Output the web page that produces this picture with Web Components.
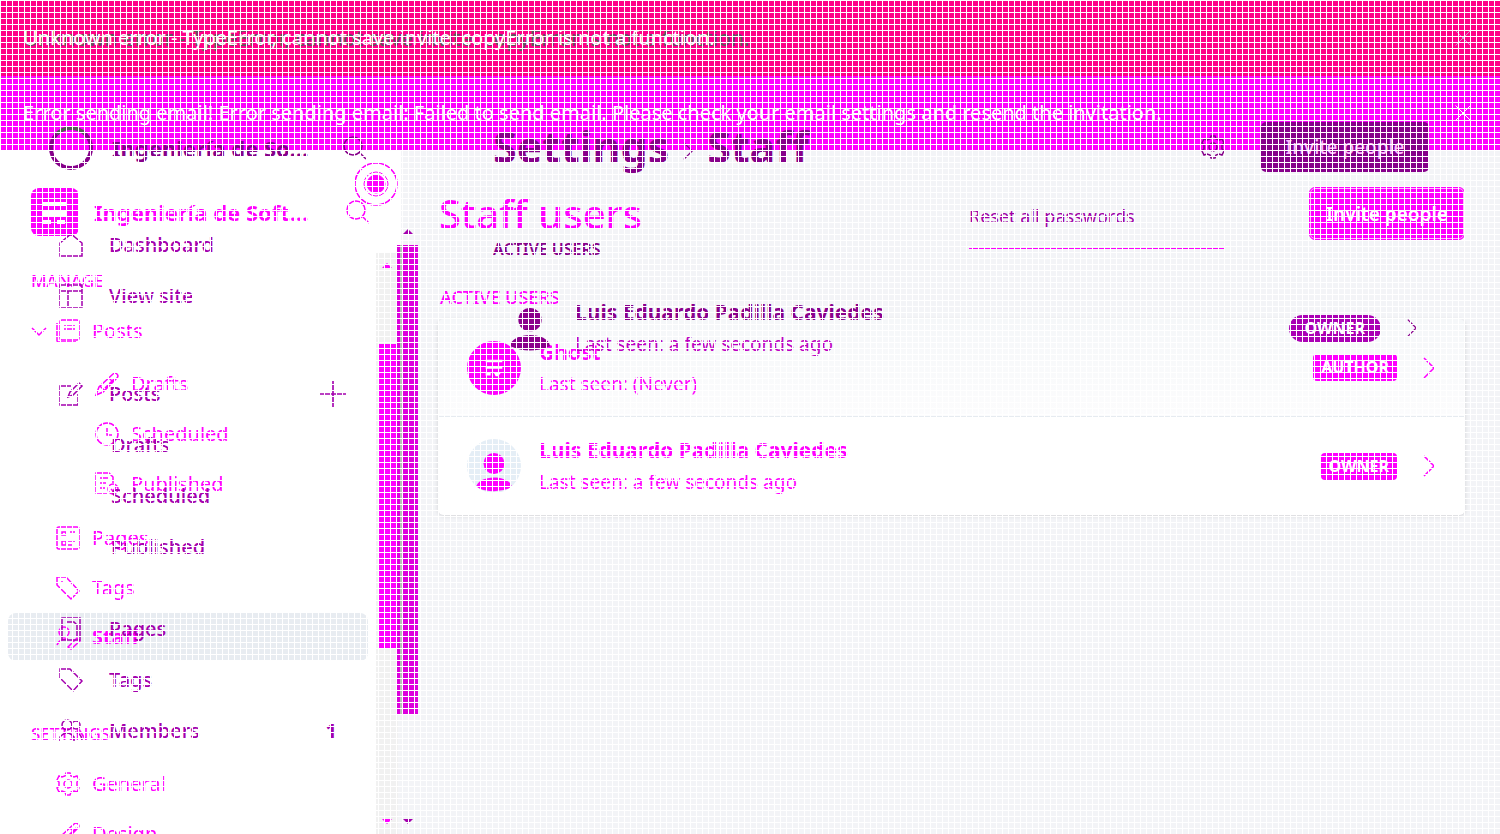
<!DOCTYPE html>
<html lang="en">
<head>
<meta charset="utf-8">
<title>Staff users</title>
<style>
html,body{margin:0;height:100%}
body{font-family:"Noto Sans","Open Sans",sans-serif;font-size:20px;color:#f0f;background:#f3f4f7;overflow:hidden}
</style>
</head>
<body>
<staff-page></staff-page>
<script>
const define=(name,html,fill)=>{
  const t=document.createElement('template');t.innerHTML=html;
  customElements.define(name,class extends HTMLElement{
    connectedCallback(){
      if(this.shadowRoot)return;
      const r=this.attachShadow({mode:'open'});
      const content=t.content.cloneNode(true);
      if(fill)fill(this,content);
      r.append(content);
    }
  });
};
const icons={
  search:'<circle cx="10" cy="10" r="9"/><path d="M17 17l6 6"/>',
  home:'<path d="M1 10L12 1l11 9v13H1z"/>',
  site:'<path d="M1 1h22v22H1zM1 7h22M9 7v16"/>',
  edit:'<path d="M12 4H1v19h18V12M9 15l2-5 9-9 3 3-9 9z"/>',
  page:'<path d="M3 1h18v22H3z"/><path d="M7 5h8l3 3v12"/>',
  tag:'<path d="M1 1h10l12 12-9 10L1 10z"/>',
  newtag:'<path d="M1 1h9l13 14-8 8L1 9z"/><path d="M6 5v2"/>',
  members:'<circle cx="8" cy="6" r="5"/><circle cx="17" cy="6" r="4"/><path d="M1 22v-4q7-8 14 0v4M16 13q6 1 7 8"/>',
  posts:'<rect x="4" y="1" width="19" height="20" rx="2"/><path d="M1 4v18q0 1 2 1h17M8 6h11M8 10h11"/>',
  pages:'<rect x="1" y="1" width="22" height="22" rx="2"/><path d="M6 6h4v3H6zM14 6h5M6 15h4v4H6zM12 15h7M12 19h5"/>',
  pencil:'<path d="M1 23l3-8L18 2q2-2 4 0t0 4L8 20zM5 14l5 5M10 16L20 6M14 6l4 4"/>',
  clock:'<circle cx="12" cy="12" r="11"/><path d="M12 6v7h5"/>',
  doc:'<path d="M12 21H1V1h13l4 4v6M5 6h8M5 11h6M5 16h5"/><circle cx="18" cy="17" r="5"/><path d="M16 17l2 2 3-4"/>',
  staff:'<circle cx="8" cy="7" r="5"/><path d="M1 20q3-7 11-6M12 22l9-9 3 3-9 8z"/>',
  gear:'<path d="M10 1h4l1 3 3 1 3-1 2 4-2 2v4l2 2-2 4-3-1-3 1-1 3h-4l-1-3-3-1-3 1-2-4 2-2v-4L1 8l2-4 3 1 3-1z"/><circle cx="12" cy="12" r="4"/>',
  plus:'<path d="M12 0v24M0 12h24"/>',
  down:'<path d="M5 9l7 7 7-7"/>',
  right:'<path d="M7 2l10 10L7 22"/>',
  close:'<path d="M3 3l18 18M21 3L3 21" stroke-width="1.2"/>',
  ghost:'<g stroke="none" fill="currentColor"><path d="M2 2h20v3H2zM2 10h20v3H2zM2 18h6v3H2zM12 18h8l-3 4h-3z"/></g>',
  person:'<g fill="currentColor" stroke="none"><circle cx="12" cy="7" r="7"/><path d="M0 23c1-9 23-9 24 0q-12 5-24 0z"/></g>',
  logo:'<g stroke="none"><rect width="24" height="24" rx="4" fill="currentColor"/><path fill="#fff" d="M6 7h12v2H6zM6 11h12v3H6zM6 16h4v2H6zM13 16h4v2h-4z"/></g>'
};
define('line-icon','<style>:host{display:block;width:24px;height:24px;flex:none}svg{display:block;width:100%;height:100%;overflow:visible;fill:none;stroke:currentColor;stroke-width:1.5}</style><svg viewBox="0 0 24 24" aria-hidden="true"></svg>',
  (h,r)=>{r.querySelector('svg').innerHTML=icons[h.getAttribute('name')]||'';});

define('alert-bar',`<style>:host{display:grid;grid-template-columns:1fr auto;align-items:center;box-sizing:border-box;height:74px;padding:0 27px 0 23px;background:#f0f;color:#fff;font-size:20px;line-height:28px;white-space:nowrap}
:host([first]){background:#ff0088;height:76px}
:host([first]) button{color:#c9c}
.msg{display:grid;align-items:center}.msg>*{grid-area:1/1}
.echo{font-size:21px;color:#5a5a5a}
button{background:none;border:0;padding:0;color:inherit}line-icon{width:20px;height:20px}</style>
<div class="msg"><span class="echo"><slot name="echo"></slot></span><span><slot></slot></span></div><button aria-label="Close"><line-icon name="close"></line-icon></button>`);

define('nav-item',`<style>:host{display:block}a{display:flex;align-items:center;height:var(--row,50px);padding-left:var(--pad,56px);gap:var(--gap,12px);color:inherit;text-decoration:none;line-height:28px;font-size:20px}
:host([sub]) a{padding-left:var(--subpad,95px)}
:host([selected]) a{height:48px;margin:0 8px 2px;padding-left:48px;background:#e8ecf1;border-radius:8px;font-weight:700}
:host([open]) a{padding-left:27px}.fold{display:none}:host([open]) .fold{display:block;margin-right:-7px}
::slotted([slot=end]){margin-left:auto}</style>
<a href="#"><line-icon class="fold" name="down"></line-icon><line-icon class="icon"></line-icon><slot></slot><slot name="end"></slot></a>`,
  (h,r)=>{const icon=r.querySelector('.icon');if(h.hasAttribute('icon'))icon.setAttribute('name',h.getAttribute('icon'));else icon.remove();});

define('scroll-rail',`<style>:host{display:flex;flex-direction:column;align-items:center;width:22px;flex:none;box-sizing:border-box;padding:11px 0 10px;background:var(--track,none)}
i{border:5px solid transparent;border-top:0;border-bottom:5px solid currentColor}i:last-child{border-bottom:0;border-top:5px solid currentColor;margin-top:auto}
b{width:var(--w,19px);height:var(--h);margin-top:var(--top);background:var(--thumb)}</style><i></i><b></b><i></i>`);

define('new-sidebar',`<style>:host{display:flex;flex-direction:column;width:401px;flex:none;background:#fff;overflow:hidden}
header{display:flex;align-items:center;padding:38px 31px 16px;gap:15px;position:relative}
header>line-icon:first-child{width:48px;height:48px}
h2{margin:0;font-size:22px;line-height:30px;font-weight:700;flex:1;white-space:nowrap}
button{background:none;border:0;padding:0;color:inherit}
.beacon{position:absolute;left:354px;top:12px;width:44px;height:44px}
.body{display:flex;flex:1;min-height:0;background:#f3f4f7}
nav{width:376px;padding-top:4px;background:#fff;box-sizing:border-box;overflow:hidden}
h3{margin:0;padding-left:31px;font-size:17px;line-height:50px;font-weight:500}
.group{margin:3px 0 4px}.settings{margin-top:48px}
scroll-rail{--track:#f1f1f1;--thumb:#f0f;--top:76px;--h:304px}</style>
<header><line-icon name="logo"></line-icon><h2>Ingeniería de Soft...</h2><button aria-label="Search"><line-icon name="search"></line-icon></button>
<svg class="beacon" viewBox="0 0 44 44" fill="none" stroke="#f0f"><circle cx="22" cy="22" r="21" stroke-width="1.5"/><circle cx="22" cy="22" r="12"/><circle cx="22" cy="22" r="9" fill="#f0f"/></svg></header>
<div class="body"><nav><h3>MANAGE</h3><nav-item icon="posts" open>Posts</nav-item>
<div class="group"><nav-item sub icon="pencil">Drafts</nav-item><nav-item sub icon="clock">Scheduled</nav-item><nav-item sub icon="doc">Published</nav-item></div>
<nav-item icon="pages">Pages</nav-item><nav-item icon="newtag">Tags</nav-item><nav-item icon="staff" selected>Staff</nav-item>
<h3 class="settings">SETTINGS</h3><nav-item icon="gear">General</nav-item><nav-item icon="pencil">Design</nav-item></nav><scroll-rail></scroll-rail></div>`);

define('old-sidebar',`<style>:host{display:block;width:397px;flex:none;color:#a400ae;font-weight:500;--row:51px;--pad:59px;--gap:26px;--subpad:111px}
header{display:flex;align-items:center;padding:126px 30px 49px 49px;color:#86008a}
.ring{width:44px;height:44px;box-sizing:border-box;border:4px solid #86008a;border-top-color:#555c55;border-radius:50%;margin-right:19px}
h2{margin:0;font-size:22px;line-height:30px;font-weight:700;flex:1;white-space:nowrap}
button{background:none;border:0;padding:0;color:inherit}.posts{margin:47px 0 31px}line-icon[slot=end]{width:26px;height:26px;margin-right:51px}b{margin-right:60px}</style>
<header><span class="ring"></span><h2>Ingeniería de So...</h2><button aria-label="Search"><line-icon name="search"></line-icon></button></header>
<nav><nav-item icon="home">Dashboard</nav-item><nav-item icon="site">View site</nav-item>
<div class="posts"><nav-item icon="edit">Posts<line-icon slot="end" name="plus"></line-icon></nav-item><nav-item sub>Drafts</nav-item><nav-item sub>Scheduled</nav-item><nav-item sub>Published</nav-item></div>
<nav-item icon="page">Pages</nav-item><nav-item icon="tag">Tags</nav-item><nav-item icon="members">Members<b slot="end">1</b></nav-item></nav>`);

define('user-row',`<style>:host{display:flex;align-items:center;height:98px;box-sizing:border-box;padding:0 24px 0 29px;background:#fff}
:host([fade]){background:linear-gradient(#f5f7f9,#fcfcfd);border-bottom:1px solid #e6ebf0}
:host([old]){background:none;padding:0 6px 0 17px;color:#8a008c}
.pic{display:flex;align-items:flex-end;justify-content:center;width:54px;height:54px;border-radius:50%;background:#e5eef6;overflow:hidden;margin-right:18px}
.pic line-icon{width:36px;height:44px}:host([fade]) .pic{background:#f0f;align-items:center;color:#fff}:host([fade]) .pic line-icon{width:20px;height:20px}
:host([old]) .pic{background:none;width:40px;height:50px;border-radius:0;margin-right:25px}:host([old]) .pic line-icon{width:40px;height:50px}
.text{flex:1;min-width:0;white-space:nowrap}
h4{margin:0;font-size:21px;line-height:32px;font-weight:700}p{margin:0;font-size:19px;line-height:32px}:host([old]) p{color:#bd00c2}
.badge{background:#f0f;color:#fff;border-radius:4px;font-size:16px;line-height:27px;font-weight:700;padding:0 8px;margin-right:20px}
:host([old]) .badge{background:#aa00b4;border-radius:14px;padding:0 16px}:host([old]) .chevron{width:22px;height:20px}</style>
<span class="pic"><line-icon name="person"></line-icon></span><div class="text"><h4><slot></slot></h4><p><slot name="seen"></slot></p></div><span class="badge"><slot name="role"></slot></span><line-icon class="chevron" name="right"></line-icon>`,
(h,r)=>{if(h.hasAttribute('fade'))r.querySelector('.pic line-icon').setAttribute('name','ghost');});

define('new-main',`<style>:host{display:block;flex:1;min-width:0;padding:37px 35px 0 37px;box-sizing:border-box}
header{display:flex;align-items:center;height:53px;padding-left:1px}
h1{margin:0;font-size:40px;line-height:53px;font-weight:500;white-space:nowrap;flex:1}
a{align-self:flex-start;width:256px;margin-right:84px;font-size:18px;line-height:58px;height:61px;border-bottom:1px solid #f0f;color:#a000a8;text-decoration:none}
button{height:53px;width:156px;flex:none;border:1px solid #f0f;border-radius:6px;background:#f0f;box-shadow:inset 0 0 0 1px #fbf;color:#fff;font:600 19px/28px "Noto Sans",sans-serif;padding:0;white-space:nowrap}
h3{margin:44px 0 9px 2px;font-size:18px;line-height:26px;font-weight:500}
.card{border-radius:6px;overflow:hidden;box-shadow:0 1px 4px #0002}</style>
<header><h1>Staff users</h1><a href="#">Reset all passwords</a><button>Invite people</button></header><h3>ACTIVE USERS</h3>
<div class="card"><user-row fade>Ghost<span slot="seen">Last seen: (Never)</span><span slot="role">AUTHOR</span></user-row><user-row>Luis Eduardo Padilla Caviedes<span slot="seen">Last seen: a few seconds ago</span><span slot="role">OWNER</span></user-row></div>`);

define('old-main',`<style>:host{display:block;flex:1;min-width:0;padding:122px 71px 0 75px;box-sizing:border-box;color:#86008a}
header{display:flex;align-items:center;height:50px}h1{margin:0;font-size:43px;line-height:50px;font-weight:700;flex:1;display:flex;align-items:center;white-space:nowrap;gap:9px}h1 line-icon{width:20px;height:20px;margin-top:8px}
header>line-icon{margin-right:36px}button{width:168px;height:50px;border:0;border-radius:5px;background:#86008a;color:#fbf;font:500 19px/28px "Noto Sans",sans-serif;padding:0}
h3{margin:64px 0 17px;font-size:16px;line-height:26px;font-weight:600}</style>
<header><h1>Settings<line-icon name="right"></line-icon>Staff</h1><line-icon name="gear"></line-icon><button>Invite people</button></header><h3>ACTIVE USERS</h3>
<user-row old>Luis Eduardo Padilla Caviedes<span slot="seen">Last seen: a few seconds ago</span><span slot="role">OWNER</span></user-row>`);

define('staff-page',`<style>:host{display:grid;grid-template:100vh/100%;overflow:hidden}
section{grid-area:1/1;display:flex;min-height:0;min-width:0}.new{flex-direction:column}.new>div{display:flex;flex:1;min-height:0}
.old{z-index:1}.rail{display:flex;padding-top:221px}.rail scroll-rail{width:21px;color:#a400ae;--thumb:linear-gradient(90deg,#d0d 3px,#b9bdb9 3px 5px,#d0d 5px);--w:21px;--top:11px;--h:469px;padding-top:8px}
.mesh{grid-area:1/1;z-index:2;pointer-events:none;background:linear-gradient(#fff 1px,#0000 1px) 0 0/6px 6px,linear-gradient(90deg,#fff 1px,#0000 1px) 0 0/6px 6px}</style>
<section class="new"><alert-bar first><span slot="echo" aria-hidden="true">Unknown error - TypeError, cannot save invite. copyError is not a function.</span>Unknown error - TypeError, cannot save invite. copyError is not a function.</alert-bar>
<alert-bar>Error sending email! Error sending email: Failed to send email. Please check your email settings and resend the invitation.</alert-bar>
<div><new-sidebar></new-sidebar><new-main></new-main></div></section>
<section class="old"><old-sidebar></old-sidebar><div class="rail"><scroll-rail></scroll-rail></div><old-main></old-main></section>
<div class="mesh"></div>`);
</script>
</body>
</html>
